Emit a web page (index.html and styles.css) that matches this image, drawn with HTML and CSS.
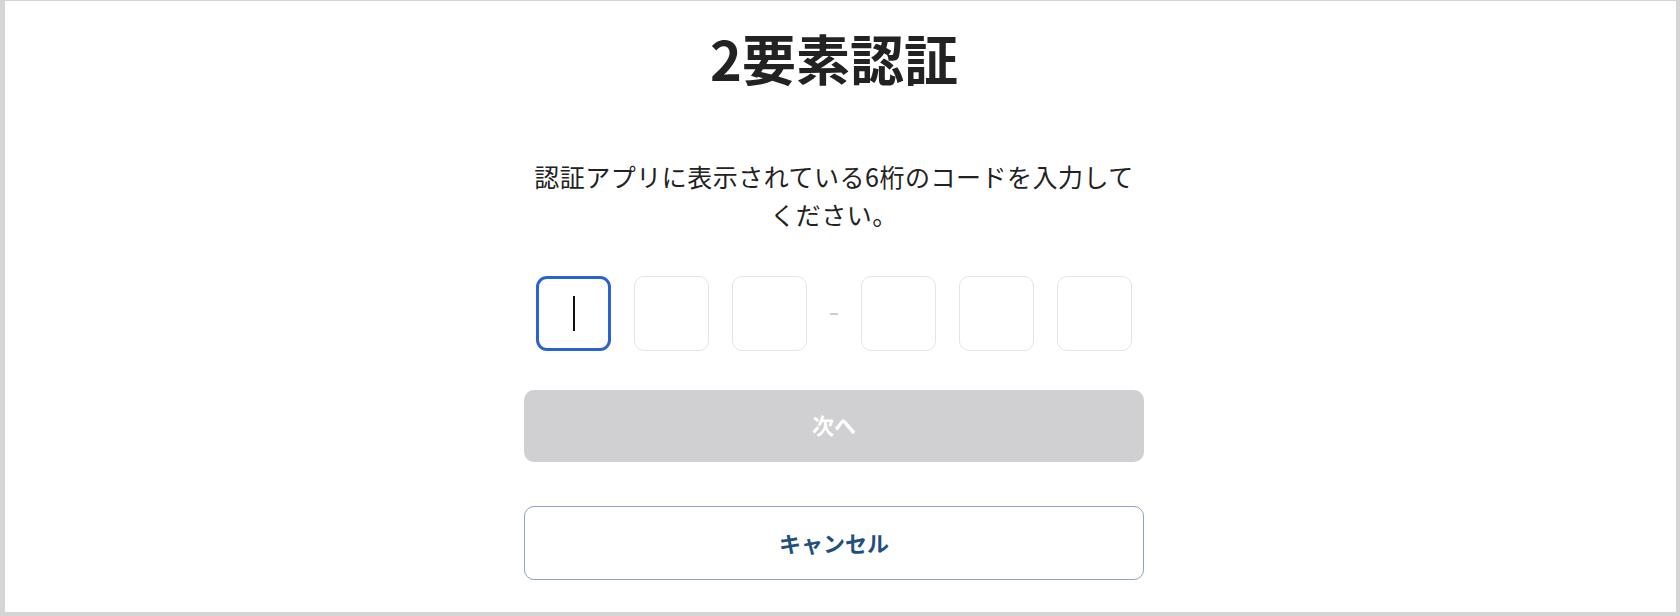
FILE: index.html
```html
<!DOCTYPE html>
<html lang="ja">
<head>
<meta charset="utf-8">
<title>2要素認証</title>
<link rel="stylesheet" href="styles.css">
</head>
<body>
<div class="frame">
  <main class="main">
    <h1 class="title">2要素認証</h1>
    <p class="desc">認証アプリに表示されている6桁のコードを入力してください。</p>
    <div class="code">
      <div class="digit active"><span class="caret"></span></div>
      <div class="digit"></div>
      <div class="digit"></div>
      <span class="sep"></span>
      <div class="digit"></div>
      <div class="digit"></div>
      <div class="digit"></div>
    </div>
    <button class="btn btn-next" type="button">次へ</button>
    <button class="btn btn-cancel" type="button">キャンセル</button>
  </main>
</div>
</body>
</html>
```

FILE: styles.css
```css
html, body {
  margin: 0;
  padding: 0;
  background: #ffffff;
}

body {
  font-family: "Noto Sans CJK JP", "Noto Sans", sans-serif;
  color: #222222;
}

.frame {
  box-sizing: border-box;
  height: 616px;
  border-left: 5px solid #d5d5d5;
  border-top: 1px solid #d5d5d5;
  border-right: 4px solid #d5d5d5;
  border-bottom: 4px solid #d5d5d5;
  overflow: hidden;
}

.main {
  display: flex;
  flex-direction: column;
  align-items: center;
  padding: 24px 13px 0 0;
}

.title {
  margin: 0;
  font-size: 54px;
  line-height: 65px;
  font-weight: 700;
  color: #222222;
}

.desc {
  margin: 68px 0 0;
  width: 620px;
  font-size: 25px;
  line-height: 37.5px;
  letter-spacing: 0.5px;
  text-align: center;
  color: #222222;
}

.code {
  margin-top: 43px;
  display: flex;
  align-items: center;
  gap: 23px;
}

.digit {
  box-sizing: border-box;
  width: 75px;
  height: 75px;
  border: 1px solid #e4e4e6;
  border-radius: 10px;
  background: #ffffff;
  display: flex;
  align-items: center;
  justify-content: center;
}

.digit.active {
  border: 3px solid #2b62d1;
  border-radius: 11px;
}

.caret {
  display: block;
  width: 2px;
  height: 35px;
  background: #111111;
}

.sep {
  display: block;
  width: 8px;
  height: 2px;
  background: #cfcfcf;
}

.btn {
  box-sizing: border-box;
  width: 620px;
  border-radius: 10px;
  font-family: "Noto Sans CJK JP", "Noto Sans", sans-serif;
  font-size: 22px;
  font-weight: 700;
  padding: 0;
  cursor: pointer;
}

.btn-next {
  margin-top: 39px;
  height: 72px;
  padding-bottom: 4px;
  border: none;
  background: #d0cfd2;
  color: #ffffff;
}

.btn-cancel {
  margin-top: 44px;
  height: 74px;
  padding-bottom: 2px;
  border: 1px solid #8aa6c3;
  background: #ffffff;
  color: #22507e;
}
```
